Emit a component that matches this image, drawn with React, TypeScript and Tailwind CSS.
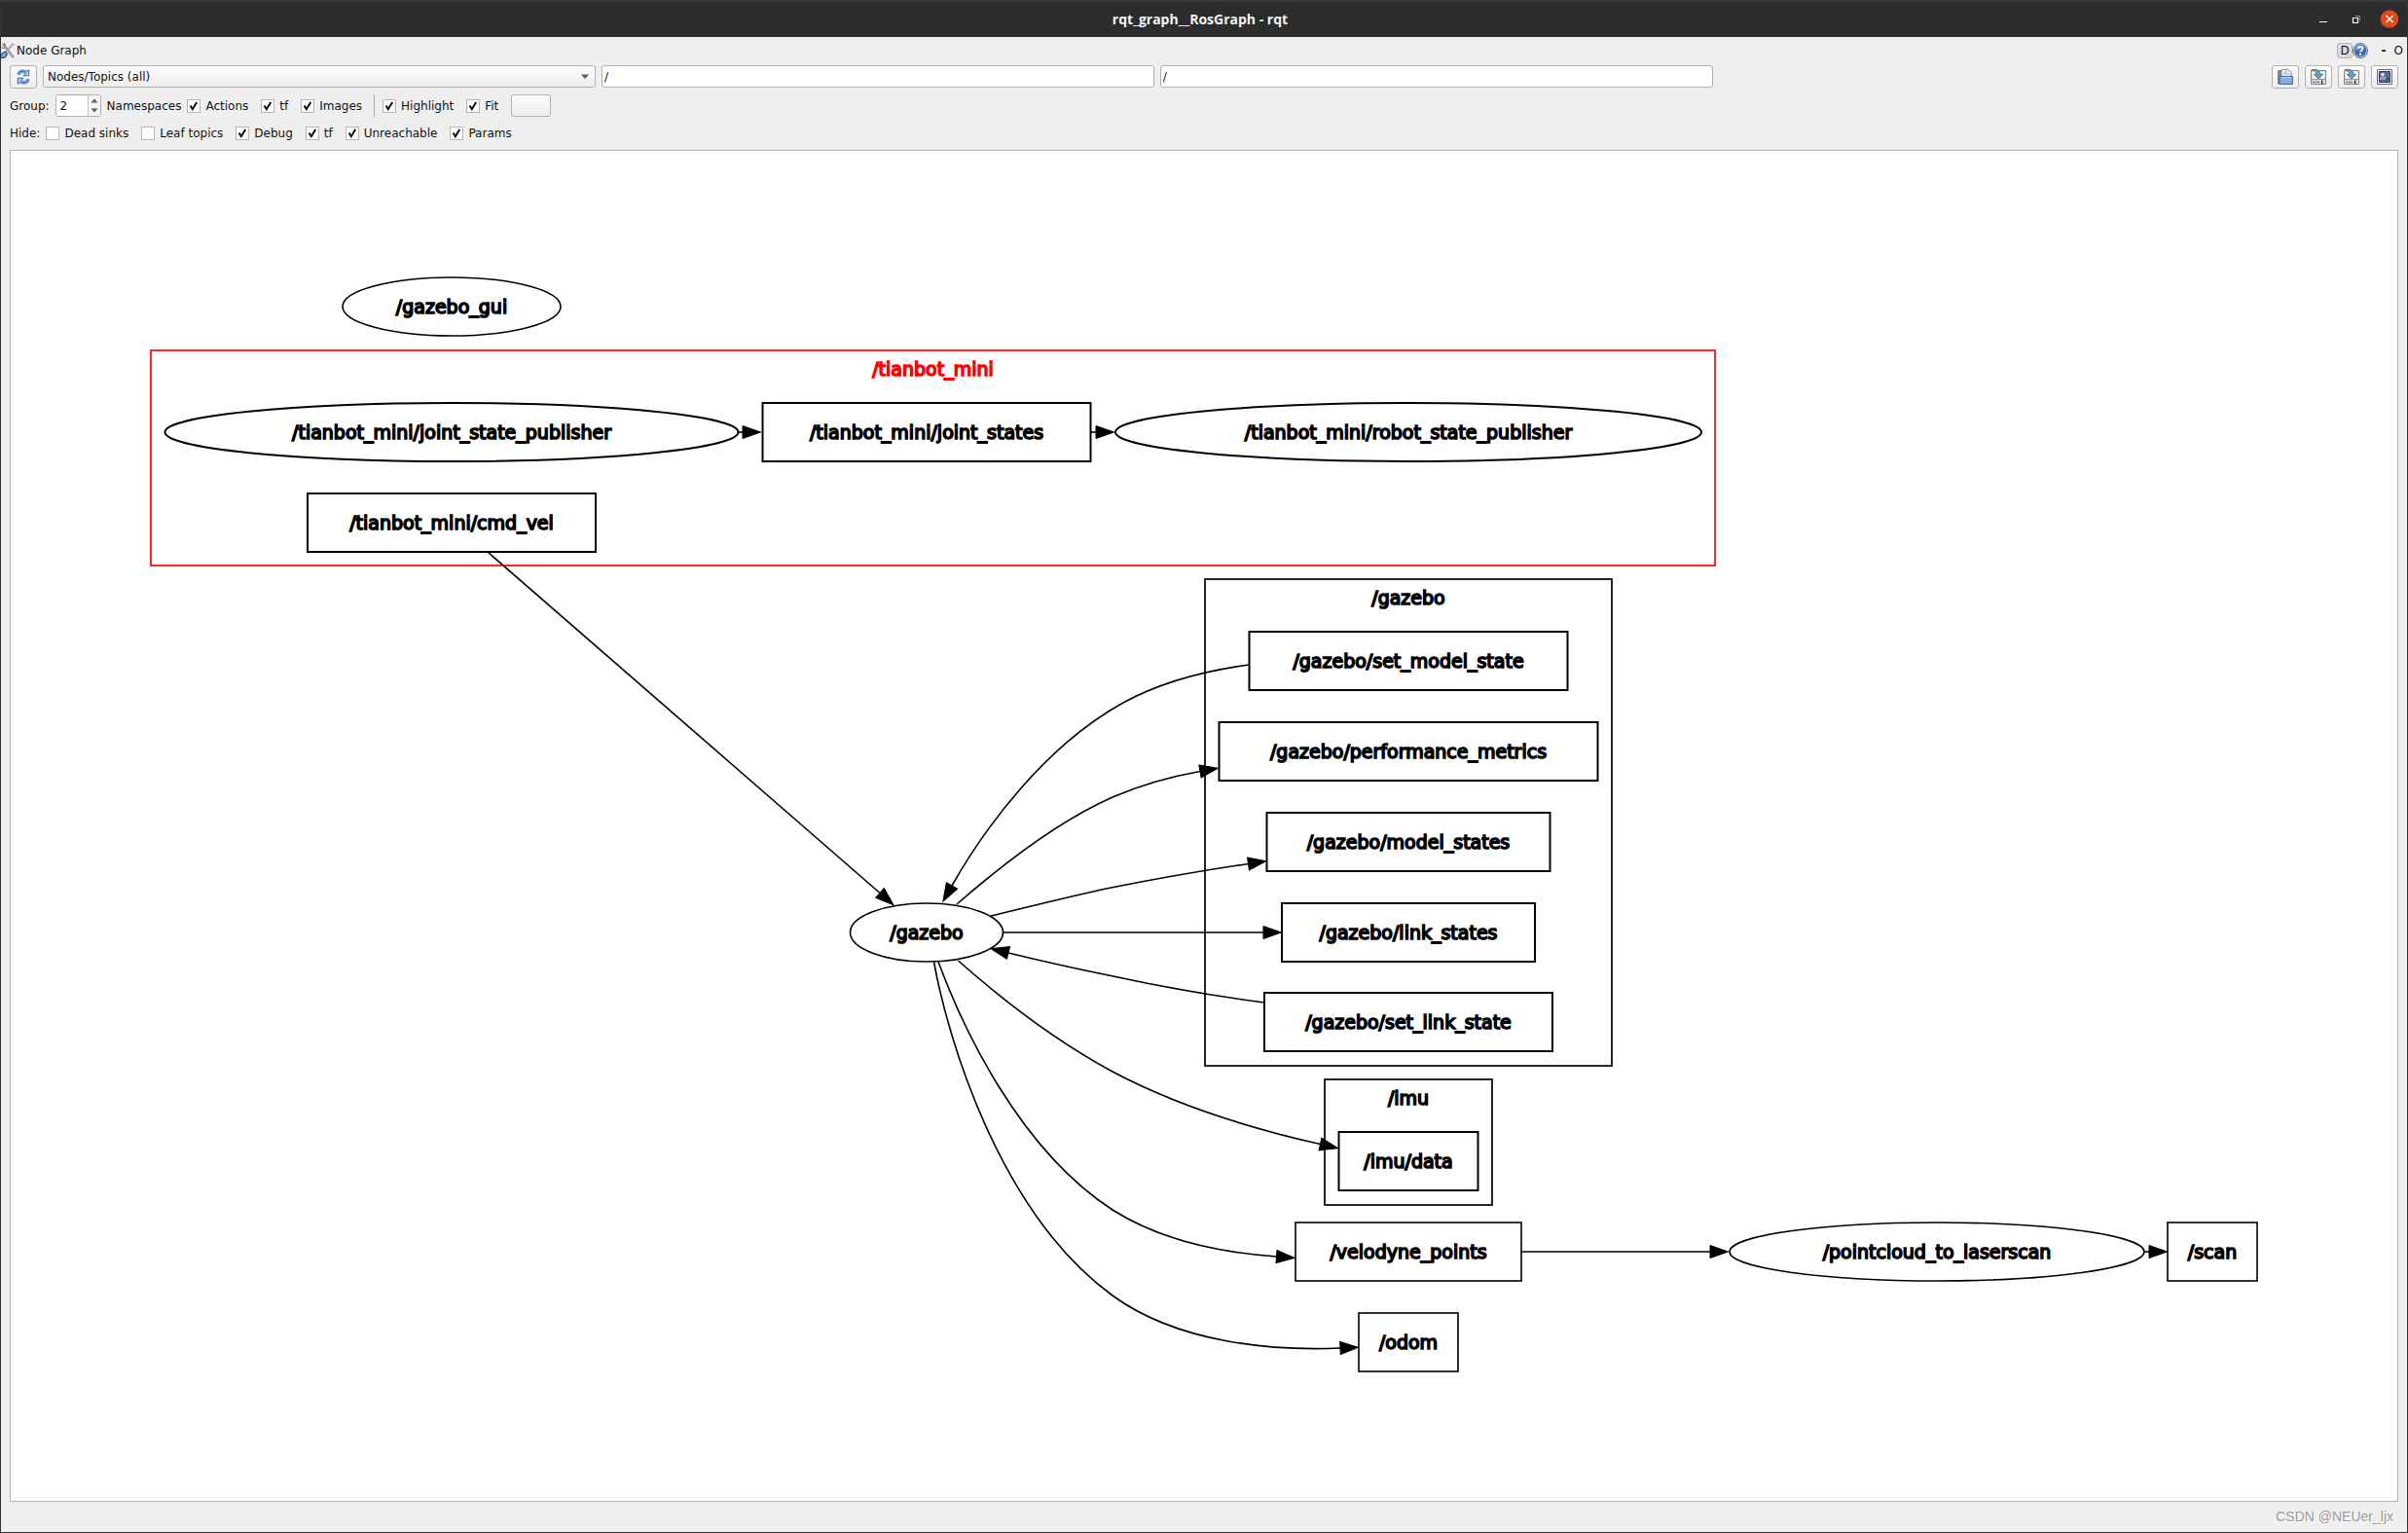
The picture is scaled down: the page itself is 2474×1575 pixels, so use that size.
import React, { useState } from 'react';

type Shape = 'ellipse' | 'box';

interface GraphNode {
  label: string;
  shape: Shape;
  cx: number;
  cy: number;
  w: number;
  grouped?: boolean;
}

interface Cluster {
  label: string;
  x: number;
  y: number;
  w: number;
  h: number;
  color: string;
}

const NODE_HEIGHT = 60;

const clusters: Cluster[] = [
  { label: '/tianbot_mini', x: 155, y: 360, w: 1607, h: 221, color: '#ff0000' },
  { label: '/gazebo', x: 1238, y: 595, w: 418, h: 500, color: '#000000' },
  { label: '/imu', x: 1361, y: 1109, w: 172, h: 129, color: '#000000' },
];

const nodes: GraphNode[] = [
  { label: '/gazebo_gui', shape: 'ellipse', cx: 464, cy: 315, w: 224 },
  { label: '/tianbot_mini/joint_state_publisher', shape: 'ellipse', cx: 464, cy: 444, w: 589, grouped: true },
  { label: '/tianbot_mini/joint_states', shape: 'box', cx: 952, cy: 444, w: 337, grouped: true },
  { label: '/tianbot_mini/robot_state_publisher', shape: 'ellipse', cx: 1447, cy: 444, w: 602, grouped: true },
  { label: '/tianbot_mini/cmd_vel', shape: 'box', cx: 464, cy: 537, w: 296, grouped: true },
  { label: '/gazebo', shape: 'ellipse', cx: 952, cy: 958, w: 157 },
  { label: '/gazebo/set_model_state', shape: 'box', cx: 1447, cy: 679, w: 327, grouped: true },
  { label: '/gazebo/performance_metrics', shape: 'box', cx: 1447, cy: 772, w: 389, grouped: true },
  { label: '/gazebo/model_states', shape: 'box', cx: 1447, cy: 865, w: 291, grouped: true },
  { label: '/gazebo/link_states', shape: 'box', cx: 1447, cy: 958, w: 260, grouped: true },
  { label: '/gazebo/set_link_state', shape: 'box', cx: 1447, cy: 1050, w: 296, grouped: true },
  { label: '/imu/data', shape: 'box', cx: 1447, cy: 1193, w: 143, grouped: true },
  { label: '/velodyne_points', shape: 'box', cx: 1447, cy: 1286, w: 232 },
  { label: '/odom', shape: 'box', cx: 1447, cy: 1379, w: 102 },
  { label: '/pointcloud_to_laserscan', shape: 'ellipse', cx: 1990, cy: 1286, w: 426 },
  { label: '/scan', shape: 'box', cx: 2273, cy: 1286, w: 92 },
];

// Every path stops where its arrow head begins
const edges: string[] = [
  'M758 444 L763 444',
  'M1120 444 L1126 444',
  'M501 567 L904 917.5',
  'M1283 683 C1239 689 1194 700 1154 722 C1074 766 1012 850 978 910',
  'M983 929 C1022 895 1082 846 1143 819 C1171 807 1202 798 1233 792.5',
  'M1018 941 C1056 932 1099 921 1139 912.5 C1187 903 1238 894 1282.5 887.5',
  'M1031 958 L1298 958',
  'M1299 1030 C1246 1023 1189 1013 1139 1002 C1104 995 1069 987 1036 979',
  'M984.5 987 C1024 1022 1082 1068 1143 1101 C1211 1137 1292 1161 1356.5 1175.5',
  'M964 988 C988 1053 1046 1180 1143 1243 C1192 1274 1254 1287 1311.5 1291',
  'M959.5 988 C973 1064 1026 1246 1143 1331 C1210 1380 1308 1388 1377 1385',
  'M1563 1286 L1757 1286',
  'M2203 1286 L2208 1286',
];

const NodeGraph: React.FC = () => (
  <svg viewBox="11 155 2452 1387" className="absolute inset-0 h-full w-full" role="img" aria-label="Node graph">
    <defs>
      <marker id="arrow" viewBox="-1 -8 21 16" refX="0" refY="0" markerWidth="21" markerHeight="16" markerUnits="userSpaceOnUse" orient="auto">
        <path d="M0 -6.5 L18.5 0 L0 6.5 Z" stroke="#000" strokeWidth="1" />
      </marker>
    </defs>

    {clusters.map((c) => (
      <g key={c.label}>
        <rect x={c.x} y={c.y} width={c.w} height={c.h} fill="none" stroke={c.color} strokeWidth="1.7" />
        <text x={c.x + c.w / 2} y={c.y + 26} textAnchor="middle" fill={c.color} stroke={c.color} className="font-['DejaVu_Sans',sans-serif] text-[19px] [stroke-width:1.6]">
          {c.label}
        </text>
      </g>
    ))}

    {edges.map((d) => (
      <path key={d} d={d} fill="none" stroke="#000" strokeWidth="1.6" markerEnd="url(#arrow)" />
    ))}

    {nodes.map((n) => (
      <g key={n.shape + n.label}>
        {n.shape === 'ellipse' ? (
          <ellipse cx={n.cx} cy={n.cy} rx={n.w / 2} ry={NODE_HEIGHT / 2} fill="none" stroke="#000" strokeWidth={n.grouped ? 2 : 1.6} />
        ) : (
          <rect x={n.cx - n.w / 2} y={n.cy - NODE_HEIGHT / 2} width={n.w} height={NODE_HEIGHT} fill="none" stroke="#000" strokeWidth={n.grouped ? 2 : 1.6} />
        )}
        <text x={n.cx} y={n.cy + 7} textAnchor="middle" fill="#000" stroke="#000" className="font-['DejaVu_Sans',sans-serif] text-[19px] [stroke-width:1.6]">
          {n.label}
        </text>
      </g>
    ))}
  </svg>
);

const Check: React.FC<{ label: string; on?: boolean }> = ({ label, on = false }) => {
  const [checked, setChecked] = useState(on);
  return (
    <label className="flex items-center gap-[5px]">
      <span className="relative block size-[14px]">
        <input
          type="checkbox"
          checked={checked}
          onChange={(e) => setChecked(e.target.checked)}
          className="peer block size-[14px] appearance-none border border-[#b6b6b6] bg-white"
        />
        <svg viewBox="0 0 14 14" className="pointer-events-none absolute inset-0 hidden size-[14px] peer-checked:block">
          <path d="M3.6 6.6 L5.8 10.2 L10.2 3" fill="none" stroke="#000" strokeWidth="1.9" />
        </svg>
      </span>
      {label}
    </label>
  );
};

const ToolButton: React.FC<{ title: string; children?: React.ReactNode }> = ({ title, children }) => (
  <button
    type="button"
    aria-label={title}
    className="flex h-6 w-7 shrink-0 items-center justify-center rounded-[3px] border border-[#b1b1b1] bg-linear-to-b from-[#fdfdfd] to-[#ededed]"
  >
    {children}
  </button>
);

const RefreshIcon = () => (
  <svg viewBox="0 0 16 16" className="size-4">
    <g fill="#a9c6e8" stroke="#3566a8" strokeWidth="0.9" strokeLinejoin="round">
      <path d="M2 5.2 C2.4 1.6 7.5 -0.4 11.2 2.2 L13.8 0.8 V6.8 H8 L9.8 4.6 C7.8 3 5.2 3 4.6 5.4 Z" />
      <path d="M14 10.8 C13.6 14.4 8.5 16.4 4.8 13.8 L2.2 15.2 V9.2 H8 L6.2 11.4 C8.2 13 10.8 13 11.4 10.6 Z" />
    </g>
    <path d="M3.4 4 C5 1.6 8.6 1.4 11 3.4 M12.6 12 C11 14.4 7.4 14.6 5 12.6" fill="none" stroke="#3f78c0" strokeWidth="1.2" />
  </svg>
);

const OpenIcon = () => (
  <svg viewBox="0 0 16 16" className="size-4">
    <path d="M0.6 15 V1.6 H4.4 V15 Z" fill="#8b8b8b" stroke="#666" strokeWidth="0.8" />
    <path d="M4 9 V0.6 H11 L14 3.6 V9 Z" fill="#fafafa" stroke="#777" strokeWidth="0.9" />
    <path d="M6 3 H10.4 M6 5 H12" stroke="#999" strokeWidth="0.9" />
    <path d="M2.4 7.4 H15.4 V15.4 H1.8 Z" fill="#86aee0" stroke="#3465a4" strokeWidth="1" />
    <path d="M3.4 8.6 H14.4" stroke="#b9d2f0" strokeWidth="0.9" />
  </svg>
);

const SaveIcon = () => (
  <svg viewBox="0 0 16 16" className="size-4">
    <path d="M0.6 1.6 H15.4 V15.4 H0.6 Z" fill="#f3f3f3" stroke="#777" strokeWidth="1" />
    <path d="M1 10.4 H15 V15 H1 Z" fill="#d9d9d9" />
    <path d="M0.6 10.4 H15.4" stroke="#8a8a8a" strokeWidth="0.9" />
    <path d="M2 13.4 H9" stroke="#8a8a8a" strokeWidth="1.4" />
    <path d="M11.6 11.6 V15" stroke="#111" strokeWidth="1.2" />
    <path d="M1 0.5 C6 -0.6 9.8 1.4 9.9 5.4 H12.6 L8 10 L3.4 5.4 H6 C6 3 4 1.2 1 0.5 Z" fill="#6f9fc0" stroke="#2c6687" strokeWidth="0.8" />
  </svg>
);

const ImageIcon = () => (
  <svg viewBox="0 0 16 16" className="size-4">
    <path d="M0.5 0.5 H15.5 V15.5 H0.5 Z" fill="#f4f4f4" stroke="#6b6b6b" strokeWidth="1" />
    <path d="M2.5 2.5 H13.5 V13.5 H2.5 Z" fill="#4d6da0" stroke="#2e3c5c" strokeWidth="1" />
    <path d="M3 8 H13 V11 H3 Z" fill="#8fa5c4" />
    <path d="M9 11 L10.6 7.5 L13 10 V12 H9 Z" fill="#3d4350" />
    <path d="M3 11 H13 V13 H3 Z" fill="#566887" />
    <circle cx="6" cy="5.6" r="1.8" fill="#f6f2b0" />
  </svg>
);

const ToolsIcon = () => (
  <svg viewBox="0 0 16 16" className="size-4 shrink-0">
    <path d="M2.5 2 L12 14" stroke="#7d7d7d" strokeWidth="2.6" strokeLinecap="round" />
    <path d="M2.5 2 L12 14" stroke="#dedede" strokeWidth="1" strokeLinecap="round" />
    <path d="M12.4 1.4 L4.5 10" stroke="#8b8b8b" strokeWidth="2" strokeLinecap="round" />
    <path d="M12.4 1.4 L4.5 10" stroke="#f0f0f0" strokeWidth="0.7" strokeLinecap="round" />
    <path d="M0.3 4.6 C1.6 6.2 4.2 5.6 4.4 3.4 C4.6 2 3.8 0.8 3 0.4" fill="none" stroke="#7d7d7d" strokeWidth="1.1" />
    <ellipse cx="3" cy="12.6" rx="3.6" ry="2.4" transform="rotate(-48 3 12.6)" fill="#7fa3d6" stroke="#204a87" strokeWidth="1.1" />
  </svg>
);

const HelpIcon = () => (
  <svg viewBox="0 0 16 16" className="size-4">
    <circle cx="8" cy="8" r="7.5" fill="#fff" stroke="#2c5694" strokeWidth="0.9" />
    <circle cx="8" cy="8" r="6.1" fill="#3d6cae" stroke="#234a86" strokeWidth="0.6" />
    <path d="M2.6 6.4 C4 2.6 10 1.4 12.8 4.6 C10 8 6 6 2.6 10 Z" fill="#7fa3d6" opacity="0.6" />
    <path d="M5.7 6 C5.7 3.4 10.4 3.3 10.4 6 C10.4 7.7 8.1 7.6 8.1 9.6" fill="none" stroke="#fff" strokeWidth="1.8" />
    <circle cx="8.1" cy="11.9" r="1.1" fill="#fff" />
  </svg>
);

const TitleBar = () => (
  <header className="grid h-[38px] grid-cols-[1fr_auto_1fr] items-center border-t-2 border-[#383838] bg-[#2c2c2c] pr-2">
    <span />
    <h1 className="font-['Open_Sans',sans-serif] text-[14px] leading-5 font-bold text-[#f2f2f2]">rqt_graph__RosGraph - rqt</h1>
    <div className="flex justify-end gap-[14px]">
      <button type="button" aria-label="Minimize" className="size-5">
        <svg viewBox="0 0 20 20" className="size-5">
          <path d="M6 12.5 H14" stroke="#fff" strokeWidth="1" />
        </svg>
      </button>
      <button type="button" aria-label="Restore" className="size-5">
        <svg viewBox="0 0 20 20" className="size-5" fill="none">
          <path d="M8.5 6.5 H13.5 V11.5" stroke="#8e8e8e" strokeWidth="1" />
          <path d="M6.5 8.5 H11.5 V13.5 H6.5 Z" stroke="#fff" strokeWidth="1.2" />
        </svg>
      </button>
      <button type="button" aria-label="Close" className="size-5">
        <svg viewBox="0 0 20 20" className="size-5">
          <circle cx="10" cy="9.5" r="9.3" fill="#e24a17" />
          <path d="M6.4 5.9 L13.6 13.1 M13.6 5.9 L6.4 13.1" stroke="#fff" strokeWidth="1.4" />
        </svg>
      </button>
    </div>
  </header>
);

export default function App() {
  const [view, setView] = useState('all');
  const [nsFilter, setNsFilter] = useState('/');
  const [topicFilter, setTopicFilter] = useState('/');
  const [group, setGroup] = useState(2);

  return (
    <div className="flex min-h-screen flex-col border-x border-b border-[#333333] bg-[#efefef] font-['DejaVu_Sans',sans-serif] text-[12px] leading-4 text-[#111]">
      <TitleBar />

      {/* Dock title */}
      <div className="flex h-[29px] items-center pr-1 pb-[2px]">
        <ToolsIcon />
        <h2>Node Graph</h2>
        <div className="ml-auto flex items-center">
          <button type="button" className="size-4 rounded-[3px] border border-[#b1b1b1] bg-[#dcdcdc] leading-[14px]">D</button>
          <button type="button" aria-label="Help" className="size-4"><HelpIcon /></button>
          <button type="button" className="ml-2 w-4 text-center font-bold">-</button>
          <button type="button" className="w-3 text-right">O</button>
        </div>
      </div>

      {/* Toolbar */}
      <div className="flex flex-col gap-[6px] px-[9px]">
        <div className="grid grid-cols-[auto_101fr_101fr_101fr_100fr_auto] items-start gap-[6px]">
          <ToolButton title="Refresh ROS graph"><RefreshIcon /></ToolButton>
          <div className="relative h-[23px]">
            <select
              aria-label="Graph type"
              value={view}
              onChange={(e) => setView(e.target.value)}
              className="block h-[23px] w-full appearance-none rounded-[3px] border border-[#b1b1b1] bg-linear-to-b from-[#fdfdfd] to-[#ededed] px-1"
            >
              <option value="nodes">Nodes only</option>
              <option value="active">Nodes/Topics (active)</option>
              <option value="all">Nodes/Topics (all)</option>
            </select>
            <svg viewBox="0 0 8 5" className="pointer-events-none absolute top-[9px] right-[7px] h-[5px] w-2">
              <path d="M0 0.5 H8 L4 5 Z" fill="#5a5a5a" />
            </svg>
          </div>
          <input
            aria-label="Namespace filter"
            value={nsFilter}
            onChange={(e) => setNsFilter(e.target.value)}
            className="h-[23px] w-full min-w-0 rounded-[3px] border border-[#b1b1b1] bg-white px-[2px]"
          />
          <input
            aria-label="Topic filter"
            value={topicFilter}
            onChange={(e) => setTopicFilter(e.target.value)}
            className="h-[23px] w-full min-w-0 rounded-[3px] border border-[#b1b1b1] bg-white px-[2px]"
          />
          <div className="col-start-6 flex gap-[6px]">
            <ToolButton title="Load DOT graph"><OpenIcon /></ToolButton>
            <ToolButton title="Save as DOT graph"><SaveIcon /></ToolButton>
            <ToolButton title="Save as SVG"><SaveIcon /></ToolButton>
            <ToolButton title="Save as image"><ImageIcon /></ToolButton>
          </div>
        </div>

        <div className="flex h-[23px] items-center">
          <label htmlFor="group">Group:</label>
          <div className="ml-[6px] flex h-[23px] w-[47px] overflow-hidden rounded-[3px] border border-[#b1b1b1] bg-white">
            <input
              id="group"
              type="number"
              value={group}
              onChange={(e) => setGroup(Number(e.target.value))}
              className="w-8 min-w-0 [appearance:textfield] px-1 [&::-webkit-inner-spin-button]:appearance-none"
            />
            <div className="flex flex-1 flex-col border-l border-[#c4c4c4] bg-[#f5f5f5]">
              <button type="button" aria-label="Increase" onClick={() => setGroup(group + 1)} className="flex flex-1 items-center justify-center">
                <svg viewBox="0 0 8 5" className="h-[5px] w-2"><path d="M0.5 4.5 H7.5 L4 0.5 Z" fill="#5a5a5a" /></svg>
              </button>
              <button type="button" aria-label="Decrease" onClick={() => setGroup(Math.max(0, group - 1))} className="flex flex-1 items-center justify-center">
                <svg viewBox="0 0 8 5" className="h-[5px] w-2"><path d="M0.5 0.5 H7.5 L4 4.5 Z" fill="#5a5a5a" /></svg>
              </button>
            </div>
          </div>
          <span className="ml-[6px]">Namespaces</span>
          <div className="ml-[6px] flex items-center gap-[13px]">
            <Check label="Actions" on />
            <Check label="tf" on />
            <Check label="Images" on />
          </div>
          <span className="ml-3 h-[23px] w-px bg-[#a8a8a8]" />
          <div className="ml-2 flex items-center gap-[13px]">
            <Check label="Highlight" on />
            <Check label="Fit" on />
            <button type="button" aria-label="Fit in view" className="h-[23px] w-[41px] rounded-[3px] border border-[#b1b1b1] bg-linear-to-b from-[#fdfdfd] to-[#ededed]" />
          </div>
        </div>

        <div className="flex h-[22px] items-center">
          <span>Hide:</span>
          <div className="ml-[6px] flex items-center gap-[13px]">
            <Check label="Dead sinks" />
            <Check label="Leaf topics" />
            <Check label="Debug" on />
            <Check label="tf" on />
            <Check label="Unreachable" on />
            <Check label="Params" on />
          </div>
        </div>
      </div>

      {/* Graph canvas */}
      <main className="relative mx-[9px] mt-[6px] flex-1 border border-[#b4b4b4] bg-white">
        <NodeGraph />
      </main>

      <footer className="flex h-[31px] items-center justify-end pr-[14px] pb-[2px]">
        <p className="font-['Liberation_Sans',sans-serif] text-[14px] text-[#999] [text-shadow:1px_1px_0_#fff]">CSDN @NEUer_ljx</p>
      </footer>
    </div>
  );
}
